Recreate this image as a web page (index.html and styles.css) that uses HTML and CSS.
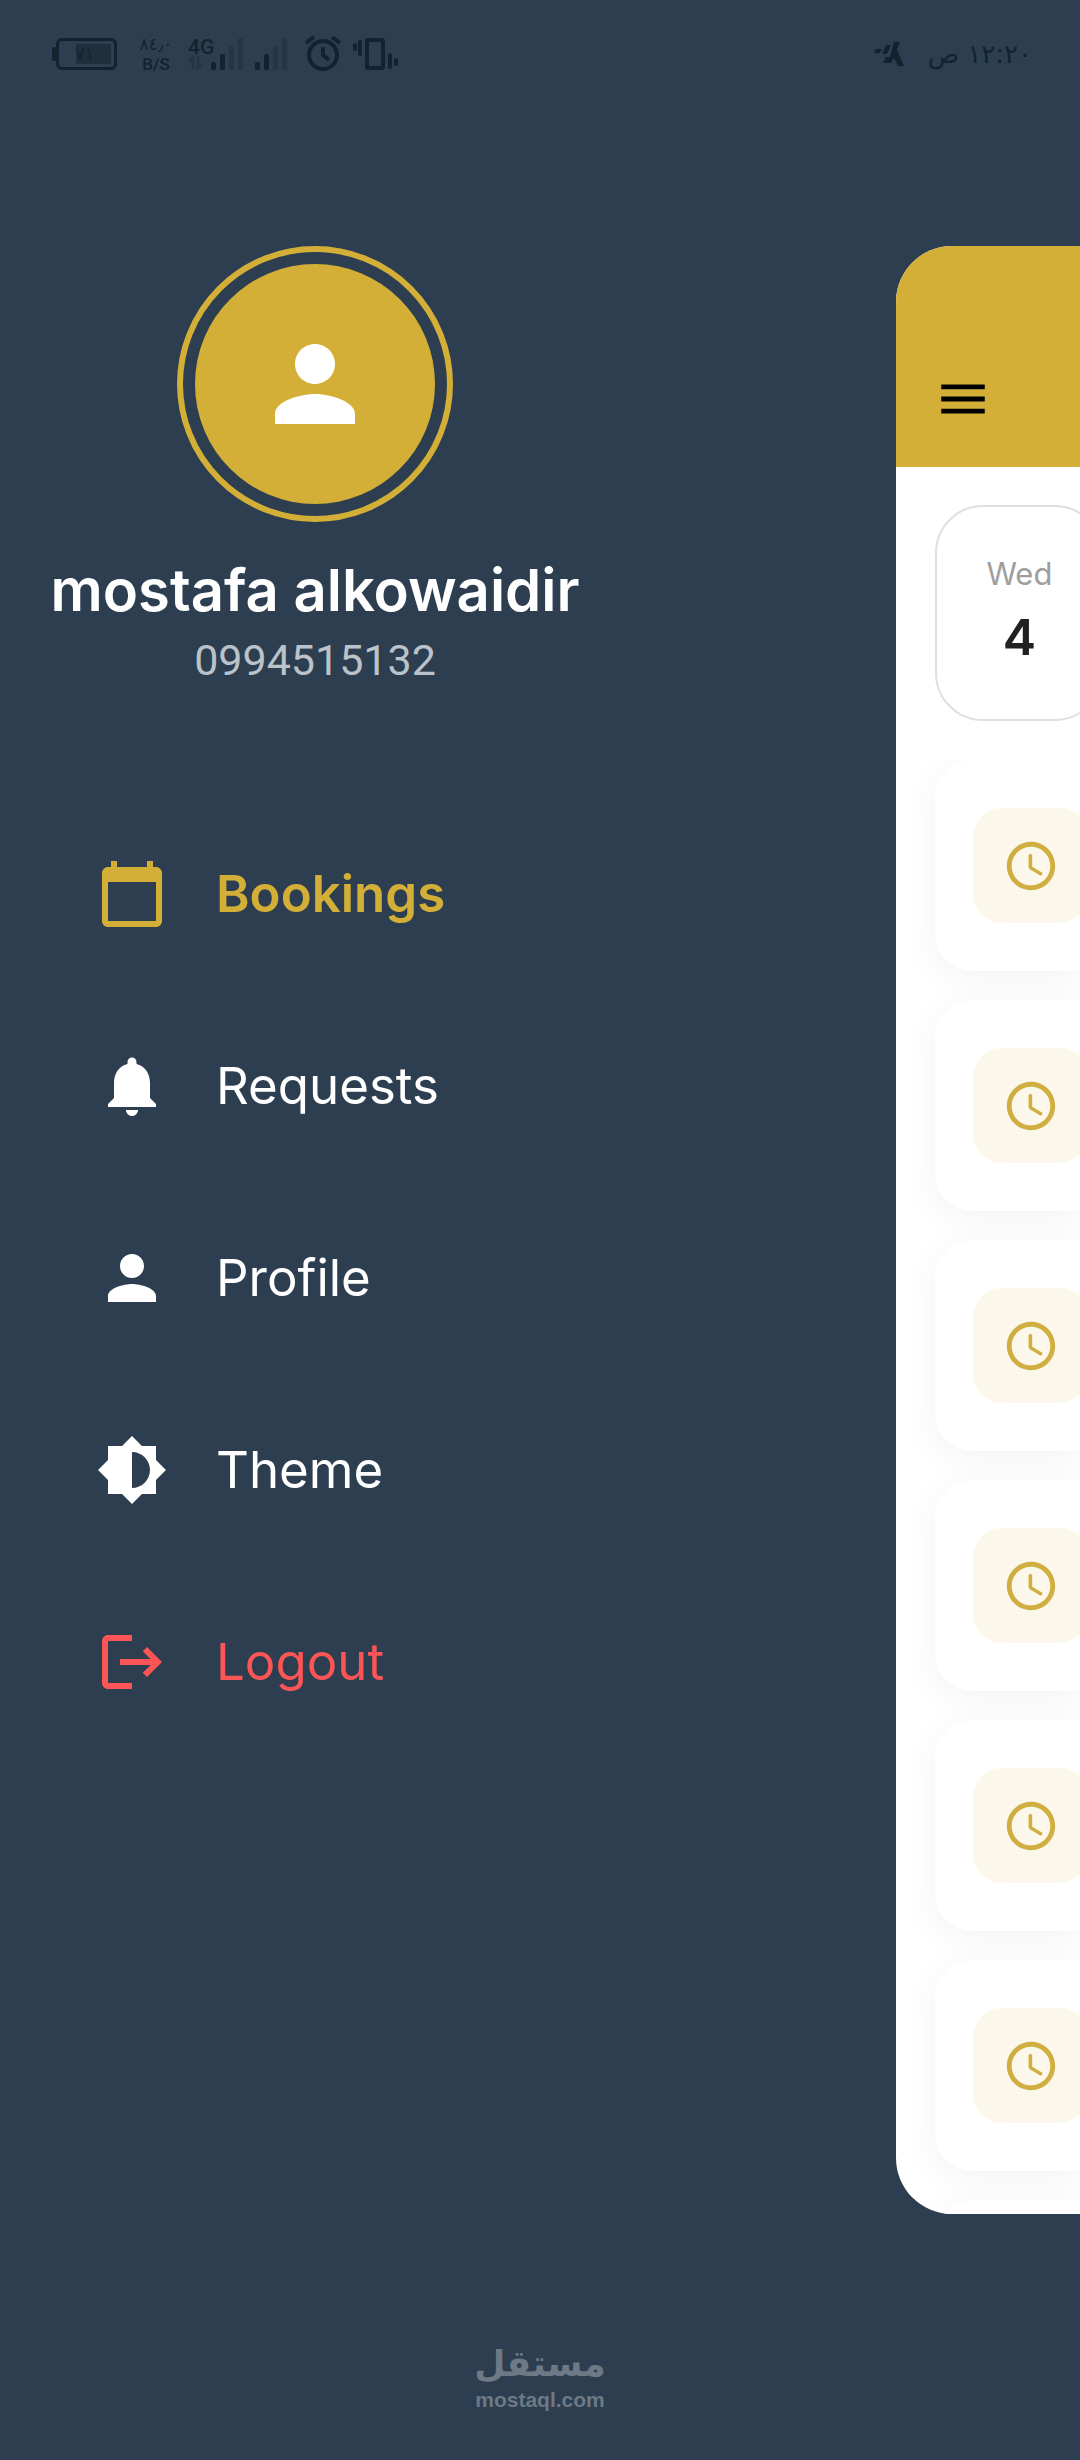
FILE: index.html
```html
<!DOCTYPE html>
<html lang="en">
<head>
<meta charset="utf-8">
<meta name="viewport" content="width=device-width, initial-scale=1">
<title>Bookings</title>
<link rel="stylesheet" href="styles.css">
</head>
<body>
<svg class="sprite" aria-hidden="true">
  <symbol id="person" viewBox="0 0 24 24"><path d="M12 12c2.21 0 4-1.79 4-4s-1.79-4-4-4-4 1.79-4 4 1.79 4 4 4zm0 2c-2.67 0-8 1.34-8 4v2h16v-2c0-2.66-5.33-4-8-4z"/></symbol>
  <symbol id="clock" viewBox="0 0 24 24"><path d="M12 2C6.48 2 2 6.48 2 12s4.48 10 10 10 10-4.48 10-10S17.52 2 12 2zm0 18c-4.42 0-8-3.58-8-8s3.58-8 8-8 8 3.58 8 8-3.58 8-8 8z"/><path d="M11.78 7h-.06c-.4 0-.72.32-.72.72v4.72c0 .35.18.68.49.86l4.15 2.49c.34.2.78.1.98-.24.21-.34.1-.79-.25-.99l-3.87-2.3V7.72c0-.4-.32-.72-.72-.72z"/></symbol>
</svg>

<header class="status">
  <div class="status-icons">
    <div class="battery"><span class="battery-level">٧١</span></div>
    <div class="speed"><span>٨٤٫٠</span><span>B/S</span></div>
    <div class="signals">
      <div class="network">
        <span>4G</span>
        <svg width="16" height="14" viewBox="0 0 16 14" aria-hidden="true"><path d="M5 13V2L1 6M10 1v11l4-4" fill="none" stroke="currentColor" stroke-width="3"/></svg>
      </div>
      <svg class="bars" width="32" height="32" viewBox="0 0 32 32" aria-hidden="true"><rect y="24" width="5" height="8" rx="2"/><rect x="9" y="16" width="5" height="16" rx="2"/><g opacity=".3"><rect x="18" y="8" width="5" height="24" rx="2"/><rect x="27" width="5" height="32" rx="2"/></g></svg>
    </div>
    <svg class="bars" width="32" height="32" viewBox="0 0 32 32" aria-hidden="true"><rect y="24" width="5" height="8" rx="2"/><rect x="9" y="16" width="5" height="16" rx="2"/><g opacity=".3"><rect x="18" y="8" width="5" height="24" rx="2"/><rect x="27" width="5" height="32" rx="2"/></g></svg>
    <svg class="alarm" width="38" height="38" viewBox="0 0 38 38" fill="none" stroke="currentColor" stroke-width="4" aria-hidden="true"><circle cx="19" cy="20" r="14"/><path d="M19 12v8l6 5M2 8l8-6M36 8l-8-6"/></svg>
    <svg width="46" height="34" viewBox="0 0 46 34" fill="none" stroke="currentColor" stroke-width="4" aria-hidden="true"><rect x="14" y="3" width="16" height="28" rx="1"/><path d="M2 8v4M7 5v12M37 18v12M43 23v4" stroke-linecap="round"/></svg>
  </div>
  <div class="status-time">
    <svg width="30" height="26" viewBox="0 0 30 26" aria-hidden="true"><path d="M0 12l2-4h6l-2 4zM8 13l4-9h5l-4 9zM20 1h6l-3 8 7 16h-6l-4-8-3 5h-8l3-6h4z"/></svg>
    <time dir="rtl" lang="ar">١٢:٢٠ ص</time>
  </div>
</header>

<div class="stage">
  <aside class="drawer">
    <div class="profile">
      <div class="avatar"><div class="avatar-disc"><svg width="120" height="120" aria-hidden="true"><use href="#person"/></svg></div></div>
      <h1 class="name">mostafa alkowaidir</h1>
      <p class="phone">0994515132</p>
    </div>
    <nav class="menu">
      <a class="item active" href="#bookings"><svg viewBox="0 0 24 24" aria-hidden="true"><path d="M20 3h-1V1h-2v2H7V1H5v2H4c-1.1 0-2 .9-2 2v16c0 1.1.9 2 2 2h16c1.1 0 2-.9 2-2V5c0-1.1-.9-2-2-2zm0 18H4V8h16v13z"/></svg>Bookings</a>
      <a class="item" href="#requests"><svg viewBox="0 0 24 24" aria-hidden="true"><path d="M12 22c1.1 0 2-.9 2-2h-4c0 1.1.89 2 2 2zm6-6v-5c0-3.07-1.64-5.64-4.5-6.32V4c0-.83-.67-1.5-1.5-1.5s-1.5.67-1.5 1.5v.68C7.63 5.36 6 7.92 6 11v5l-2 2v1h16v-1l-2-2z"/></svg>Requests</a>
      <a class="item" href="#profile"><svg aria-hidden="true"><use href="#person"/></svg>Profile</a>
      <a class="item" href="#theme"><svg viewBox="0 0 24 24" aria-hidden="true"><path d="M20 15.31L23.31 12 20 8.69V4h-4.69L12 .69 8.69 4H4v4.69L.69 12 4 15.31V20h4.69L12 23.31 15.31 20H20v-4.69zM12 18V6c3.31 0 6 2.69 6 6s-2.69 6-6 6z"/></svg>Theme</a>
      <a class="item logout" href="#logout"><svg viewBox="0 0 24 24" aria-hidden="true"><path d="M17 7l-1.41 1.41L18.17 11H8v2h10.17l-2.58 2.58L17 17l5-5zM4 5h8V3H4c-1.1 0-2 .9-2 2v14c0 1.1.9 2 2 2h8v-2H4V5z"/></svg>Logout</a>
    </nav>
  </aside>

  <main class="panel">
    <div class="toolbar">
      <button class="menu-button" type="button" aria-label="Close menu"><svg viewBox="0 0 24 24" aria-hidden="true"><path d="M3 18h18v-2H3v2zm0-5h18v-2H3v2zm0-7v2h18V6H3z"/></svg></button>
    </div>
    <div class="dates">
      <button class="date" type="button"><span class="weekday">Wed</span><span class="day">4</span></button>
    </div>
    <ul class="slots">
      <li class="slot"><span class="slot-icon"><svg aria-hidden="true"><use href="#clock"/></svg></span></li>
      <li class="slot"><span class="slot-icon"><svg aria-hidden="true"><use href="#clock"/></svg></span></li>
      <li class="slot"><span class="slot-icon"><svg aria-hidden="true"><use href="#clock"/></svg></span></li>
      <li class="slot"><span class="slot-icon"><svg aria-hidden="true"><use href="#clock"/></svg></span></li>
      <li class="slot"><span class="slot-icon"><svg aria-hidden="true"><use href="#clock"/></svg></span></li>
      <li class="slot"><span class="slot-icon"><svg aria-hidden="true"><use href="#clock"/></svg></span></li>
      <li class="slot"><span class="slot-icon"><svg aria-hidden="true"><use href="#clock"/></svg></span></li>
    </ul>
  </main>
</div>

<footer class="brand">
  <span class="brand-ar" lang="ar" dir="rtl">مستقل</span>
  <span class="brand-en">mostaql.com</span>
</footer>
</body>
</html>
```
FILE: styles.css
```css
:root {
  --navy: #2c3e50;
  --gold: #d3af37;
  --ink: #14222f;
}

* {
  box-sizing: border-box;
}

body {
  margin: 0;
  min-height: 100vh;
  display: grid;
  grid-template-rows: 10vh 80vh 10vh;
  grid-template-columns: 100%;
  background: var(--navy);
  color: #fff;
  font-family: Inter, "Noto Sans", sans-serif;
}

svg {
  display: block;
  flex: none;
  fill: currentColor;
}

.sprite {
  position: absolute;
  width: 0;
  height: 0;
}

/* Status bar */
.status {
  display: flex;
  justify-content: space-between;
  align-items: flex-start;
  padding: 34px 48px 0 52px;
  color: var(--ink);
}

.status-icons {
  display: flex;
  align-items: center;
  height: 40px;
}

.status-icons svg[fill="none"],
.network svg {
  fill: none;
}

.battery {
  display: flex;
  align-items: center;
  margin-right: 24px;
}

.battery::before {
  content: "";
  width: 4px;
  height: 14px;
  border-radius: 2px 0 0 2px;
  background: var(--ink);
}

.battery-level {
  width: 61px;
  height: 32px;
  padding-left: 16px;
  border: 3px solid var(--ink);
  border-radius: 6px;
  background: linear-gradient(#202f3e, #202f3e) 17px 3px / 35px 20px no-repeat;
  font: 18px/26px "DejaVu Sans", sans-serif;
}

.speed {
  display: flex;
  flex-direction: column;
  align-items: center;
  width: 30px;
  margin-right: 17px;
  font: 500 17px/20px Roboto, "DejaVu Sans", sans-serif;
}

.signals {
  display: flex;
  align-items: flex-end;
  margin-right: 12px;
}

.network {
  display: flex;
  flex-direction: column;
  width: 23px;
  font: 500 21px/18px Roboto, sans-serif;
}

.network svg {
  opacity: .3;
}

.alarm {
  margin: 0 11px 0 17px;
}

.status-time {
  display: flex;
  align-items: center;
  gap: 24px;
  height: 40px;
  font: 26px/40px "DejaVu Sans", sans-serif;
}

/* Stage: navigation drawer with the current screen pushed aside */
.stage {
  display: grid;
  grid-template-columns: 83% 17%;
}

.drawer {
  padding-left: 48px;
}

.profile {
  display: flex;
  flex-direction: column;
  align-items: center;
  width: fit-content;
  min-width: 534px;
}

.avatar {
  padding: 12px;
  border: 6px solid var(--gold);
  border-radius: 50%;
}

.avatar-disc {
  display: grid;
  place-items: center;
  width: 240px;
  height: 240px;
  border-radius: 50%;
  background: var(--gold);
}

.name {
  margin: 28px 0 0;
  font-size: 58px;
  font-weight: 600;
  line-height: 80px;
  white-space: nowrap;
}

.phone {
  margin: 0;
  color: #bbc2ca;
  font: 43px/60px Roboto, sans-serif;
}

.menu {
  display: flex;
  flex-direction: column;
  align-items: flex-start;
  gap: 120px;
  margin-top: 168px;
  padding-left: 48px;
}

.item {
  display: flex;
  align-items: center;
  gap: 48px;
  color: #fff;
  font-size: 51px;
  line-height: 72px;
  text-decoration: none;
}

.item svg {
  width: 72px;
  height: 72px;
}

.active {
  color: var(--gold);
  font-weight: 600;
}

.logout {
  color: #fc5555;
}

/* Current screen: only its leading edge shows while the drawer is open */
.panel {
  display: flex;
  flex-direction: column;
  overflow: hidden;
  border-radius: 56px 0 0 56px;
  background: #fff;
}

.toolbar {
  flex: none;
  padding: 124px 38px 39px;
  background: var(--gold);
}

.menu-button {
  display: block;
  padding: 0;
  border: 0;
  background: none;
  color: #000;
}

.menu-button svg,
.slot-icon svg {
  width: 58px;
  height: 58px;
}

.dates {
  display: flex;
  flex: none;
  padding: 38px 0 39px 39px;
}

.date {
  display: flex;
  flex: none;
  flex-direction: column;
  align-items: center;
  justify-content: center;
  gap: 8px;
  width: 168px;
  height: 216px;
  padding: 0;
  border: 2px solid #e0e0e0;
  border-radius: 48px;
  background: #fff;
  font-family: inherit;
}

.weekday {
  color: #9e9e9e;
  font-size: 31px;
  line-height: 40px;
}

.day {
  color: #212121;
  font-size: 50px;
  font-weight: 600;
  line-height: 70px;
}

.slots {
  display: flex;
  flex: 1;
  flex-direction: column;
  gap: 29px;
  min-height: 0;
  margin: 0;
  padding-left: 39px;
  overflow: hidden;
  list-style: none;
}

.slot {
  display: flex;
  flex: none;
  padding: 48px 0 48px 38px;
  border-radius: 38px 0 0 38px;
  background: #fff;
  box-shadow: 0 8px 36px rgb(0 0 0 / 5%);
}

.slot-icon {
  display: grid;
  flex: none;
  place-items: center;
  width: 115px;
  height: 115px;
  border-radius: 29px;
  background: #fbf7ea;
  color: #d0ae40;
}

/* Brand mark */
.brand {
  display: flex;
  flex-direction: column;
  align-items: center;
  justify-content: flex-end;
  padding-bottom: 48px;
  color: #6d7985;
}

.brand-ar {
  font: bold 36px/48px "DejaVu Sans", sans-serif;
}

.brand-en {
  font: bold 21px/24px "Liberation Sans", sans-serif;
}
```
